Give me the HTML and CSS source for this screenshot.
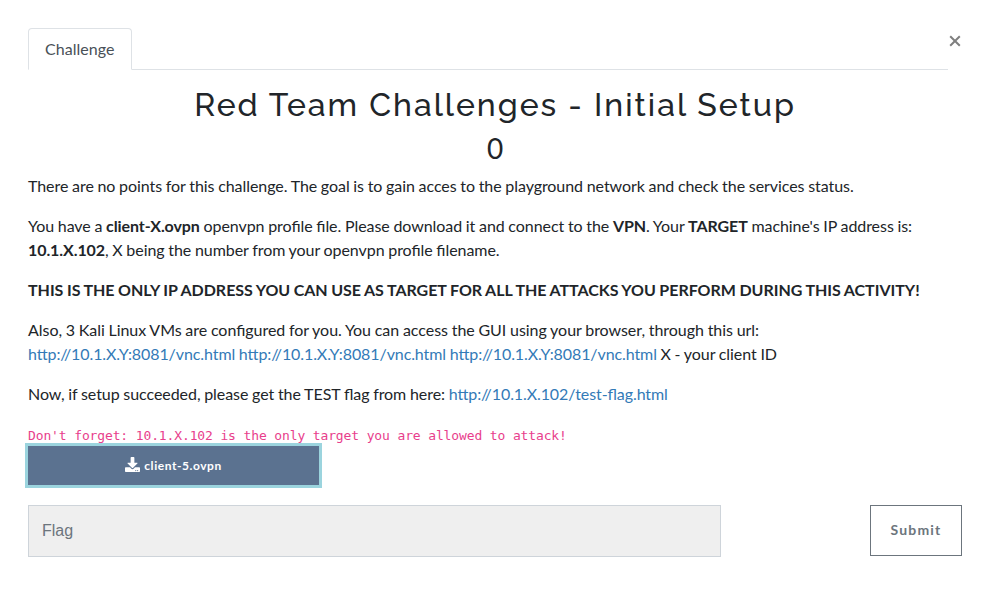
FILE: index.html
```html
<!DOCTYPE html>
<html lang="en">
<head>
<meta charset="utf-8">
<title>Challenge</title>
<link rel="stylesheet" href="styles.css">
</head>
<body>
<main class="modal">
  <header class="top">
    <nav class="tabs"><a class="tab">Challenge</a></nav>
    <button class="close" aria-label="Close"><svg width="12" height="12" viewBox="0 0 12 12"><path d="M1.2 1.2l9.600 9.600M10.800 1.200l-9.600 9.600"/></svg></button>
  </header>
  <h2 class="title">Red Team Challenges - Initial Setup</h2>
  <h3 class="points">0</h3>
  <section class="desc">
    <p>There are no points for this challenge. The goal is to gain acces to the playground network and check the services status.</p>
    <p>You have a <b>client-X.ovpn</b> openvpn profile file. Please download it and connect to the <b>VPN</b>. Your <b>TARGET</b> machine's IP address is:<br><b>10.1.X.102</b>, X being the number from your openvpn profile filename.</p>
    <p><b>THIS IS THE ONLY IP ADDRESS YOU CAN USE AS TARGET FOR ALL THE ATTACKS YOU PERFORM DURING THIS ACTIVITY!</b></p>
    <p><span class="lead">Also, 3 Kali Linux VMs are configured for you. You can access the GUI using your browser, through this url:</span><br><a>http://10.1.X.Y:8081/vnc.html</a> <a>http://10.1.X.Y:8081/vnc.html</a> <a>http://10.1.X.Y:8081/vnc.html</a> X - your client ID</p>
    <p>Now, if setup succeeded, please get the TEST flag from here: <a>http://10.1.X.102/test-flag.html</a></p>
    <code>Don't forget: 10.1.X.102 is the only target you are allowed to attack!</code>
  </section>
  <a class="file"><svg width="15" height="15" viewBox="0 0 512 512"><path d="M216 0h80c13.300 0 24 10.700 24 24v168h87.700c17.800 0 26.700 21.500 14.100 34.100L269.700 378.300c-7.500 7.500-19.800 7.500-27.300 0L90.100 226.100c-12.600-12.600-3.700-34.100 14.100-34.100H192V24c0-13.300 10.700-24 24-24zm296 376v112c0 13.300-10.700 24-24 24H24c-13.300 0-24-10.700-24-24V376c0-13.300 10.700-24 24-24h146.700l49 49c20.100 20.100 52.500 20.100 72.600 0l49-49H488c13.300 0 24 10.700 24 24zm-124 88c0-11-9-20-20-20s-20 9-20 20 9 20 20 20 20-9 20-20zm64 0c0-11-9-20-20-20s-20 9-20 20 9 20 20 20 20-9 20-20z"/></svg><span>client-5.ovpn</span></a>
  <form class="entry">
    <input class="flag" type="text" placeholder="Flag">
    <button class="submit" type="button">Submit</button>
  </form>
</main>
</body>
</html>
```
FILE: styles.css
```css
* { box-sizing: border-box; }
body { margin: 0; background: #fff; color: #212529; font: 16px/24px Lato, sans-serif; }
.modal { padding: 28px 29px 0 28px; }
.top { display: flex; height: 42px; }
.tabs { width: 920px; border-bottom: 1px solid #dee2e6; }
.tab { display: block; width: 104px; height: 42px; padding: 8px 16px; color: #495057; background: #fff; border: 1px solid #dee2e6; border-bottom-color: #fff; border-radius: 4px 4px 0 0; letter-spacing: .05px; }
.close { display: flex; margin: 7px 0 0 1px; padding: 0; height: 12px; border: 0; background: none; }
.close path { stroke: #7f7f7f; stroke-width: 2; fill: none; }
.title, .points { margin: 0; text-align: center; }
.title { margin-top: 16px; font: 500 32px/38px Raleway, sans-serif; letter-spacing: 2px; }
.points { margin-top: 7px; font: 400 28px/34px Lato, sans-serif; }
.desc { margin-top: 9px; height: 272px; white-space: nowrap; letter-spacing: -.06px; word-spacing: -.32px; font-feature-settings: "liga" 1; }
.desc p { margin: 0 0 16px; }
.lead { letter-spacing: -.035px; }
a { color: #337ab7; }
.desc a { letter-spacing: -.09px; }
b { font-weight: 700; letter-spacing: -.02px; }
p:nth-child(2) b { letter-spacing: -.08px; }
code { display: block; margin-top: 18px; color: #e83e8c; font: 13px/24px "DejaVu Sans Mono", monospace; letter-spacing: -.13px; word-spacing: 0; }
.file { display: flex; align-items: center; justify-content: center; gap: 4px; width: 291px; height: 39px; background: #5b7290; color: #fff; font-size: 12px; font-weight: 700; letter-spacing: .55px; box-shadow: 0 0 0 3px #9bd4de; }
.file svg { position: relative; top: -1px; fill: #fff; }
.entry { display: flex; justify-content: space-between; margin-top: 20px; }
.flag { width: 693px; height: 52px; padding: 0 13px; background: #efefef; border: 1px solid #ced4da; border-radius: 0; font: 16px "Liberation Sans", sans-serif; }
.flag::placeholder { color: #6c757d; opacity: 1; }
.submit { width: 92px; height: 51px; background: #fff; border: 1px solid #6c757d; color: #6c757d; padding: 0 0 2px; font: 700 14px Lato, sans-serif; letter-spacing: 1.15px; }
```
